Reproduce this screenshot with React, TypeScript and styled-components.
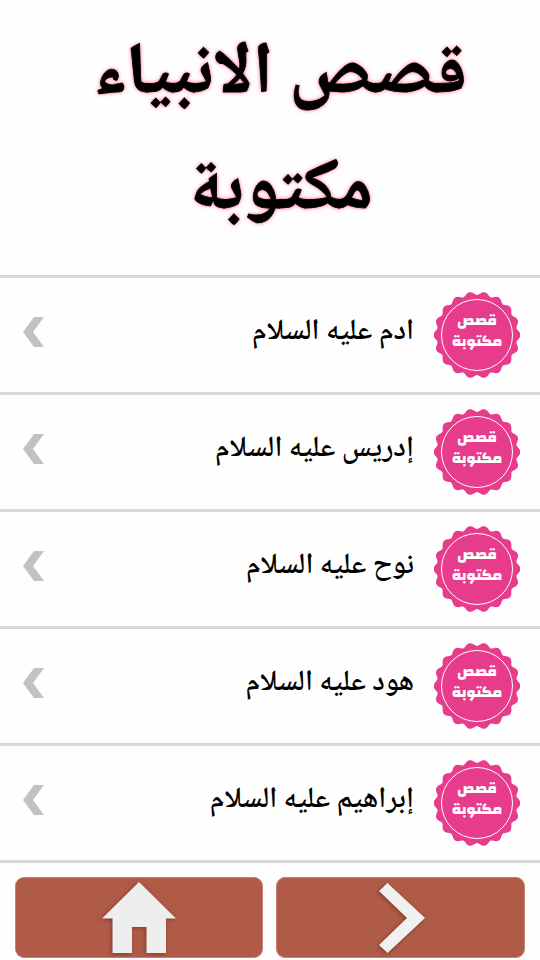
import React from "react";
import styled, { createGlobalStyle } from "styled-components";

const GlobalStyle = createGlobalStyle`
  *, *::before, *::after { box-sizing: border-box; }
  body { margin: 0; background: #fefefe; }
`;

const naskh = '"Noto Naskh Arabic UI", "Droid Arabic Naskh UI", "Noto Naskh Arabic", "DejaVu Sans", serif';

const Screen = styled.main`
  width: 100%;
  height: 960px;
  display: flex;
  flex-direction: column;
  overflow: hidden;
  direction: rtl;
  color: #000;
  font-family: ${naskh};
`;

const Header = styled.header`
  height: 275px;
  padding: 16px 20px 0 40px;
  flex: none;
`;

const Title = styled.h1`
  margin: 0;
  font-size: 72.3px;
  font-weight: 700;
  line-height: 116px;
  text-align: center;
  -webkit-text-stroke: 0.8px #000;
  text-shadow: 0 0 3px #ff6d88, 0 0 5px #ff9aac;
`;

const TitleLine = styled.span`
  display: block;
  white-space: nowrap;
`;

const StoryList = styled.ul`
  list-style: none;
  margin: 0;
  padding: 0;
  flex: none;
  border-bottom: 3px solid #d8d8d8;
`;

const StoryRow = styled.li`
  height: 117px;
  display: flex;
  align-items: center;
  padding: 0 20px 0 22px;
  border-top: 3px solid #d8d8d8;
`;

const StoryName = styled.span`
  flex: 1;
  padding: 0 20px 6px 0;
  font-size: 29.4px;
  font-weight: 600;
  line-height: 50px;
  white-space: nowrap;
`;

const Seal = styled.svg`
  width: 86px;
  height: 86px;
  display: block;
  flex: none;
`;

const SealText = styled.text`
  font-family: "Changa", "Cairo", "Noto Kufi Arabic", "DejaVu Sans", sans-serif;
  font-size: 14.8px;
  font-weight: 800;
  fill: #fff;
  text-anchor: middle;
`;

const RowArrow = styled.svg`
  width: 22px;
  height: 30px;
  display: block;
  flex: none;
  margin-bottom: 6px;
`;

const NavBar = styled.nav`
  direction: ltr;
  display: grid;
  grid-template-columns: 248px 249px;
  gap: 13px;
  padding: 14px 15px 0;
`;

const NavButton = styled.button`
  height: 81px;
  padding: 0;
  border: 1px solid #c98272;
  border-radius: 9px;
  background: #b05b48;
  display: flex;
  justify-content: center;
  align-items: center;
`;

const NavIcon = styled.svg<{ $shift: number }>`
  display: block;
  overflow: visible;
  margin-left: ${(p) => p.$shift}px;
  filter: drop-shadow(-1px 1px 2px rgba(70, 25, 15, 0.5));
`;

const stories = ["ادم", "إدريس", "نوح", "هود", "إبراهيم"];

const BUMPS = 18;
const sealEdge = Array.from({ length: 360 }, (_, i) => {
  const a = (i * Math.PI) / 180;
  const r = 40 + 3.4 * Math.pow(Math.abs(Math.cos((BUMPS / 2) * a)), 1.6);
  return `${(43 + r * Math.cos(a)).toFixed(2)},${(43 + r * Math.sin(a)).toFixed(2)}`;
}).join(" ");

function StorySeal() {
  return (
    <Seal viewBox="0 0 86 86">
      <polygon points={sealEdge} fill="#e73c8c" />
      <circle cx="43" cy="43" r="35.5" fill="none" stroke="#fff" strokeWidth="1" />
      <SealText x="43" y="33">قصص</SealText>
      <SealText x="43" y="54">مكتوبة</SealText>
    </Seal>
  );
}

export default function App() {
  return (
    <>
      <GlobalStyle />
      <Screen>
        <Header>
          <Title>
            <TitleLine>قصص الانبياء</TitleLine>
            <TitleLine>مكتوبة</TitleLine>
          </Title>
        </Header>
        <StoryList>
          {stories.map((name) => (
            <StoryRow key={name}>
              <StorySeal />
              <StoryName>{name} عليه السلام</StoryName>
              <RowArrow viewBox="0 0 22 30">
                <path d="M12 0H22L11 15L22 30H12L1 15Z" fill="#c2c2c2" />
              </RowArrow>
            </StoryRow>
          ))}
        </StoryList>
        <NavBar>
          <NavButton aria-label="الرئيسية">
            <NavIcon $shift={-1} width="74" height="71" viewBox="0 0 74 71">
              <path d="M37 0L74 36.500H64V71H44.500V45H30V71H10.500V36.500H0Z" fill="#eee" />
            </NavIcon>
          </NavButton>
          <NavButton aria-label="التالي">
            <NavIcon $shift={3} width="46" height="70" viewBox="0 0 46 70">
              <path d="M8.500 0L46 35L8.500 70L0 62L28 35L0 8Z" fill="#f0f0f0" />
            </NavIcon>
          </NavButton>
        </NavBar>
      </Screen>
    </>
  );
}
